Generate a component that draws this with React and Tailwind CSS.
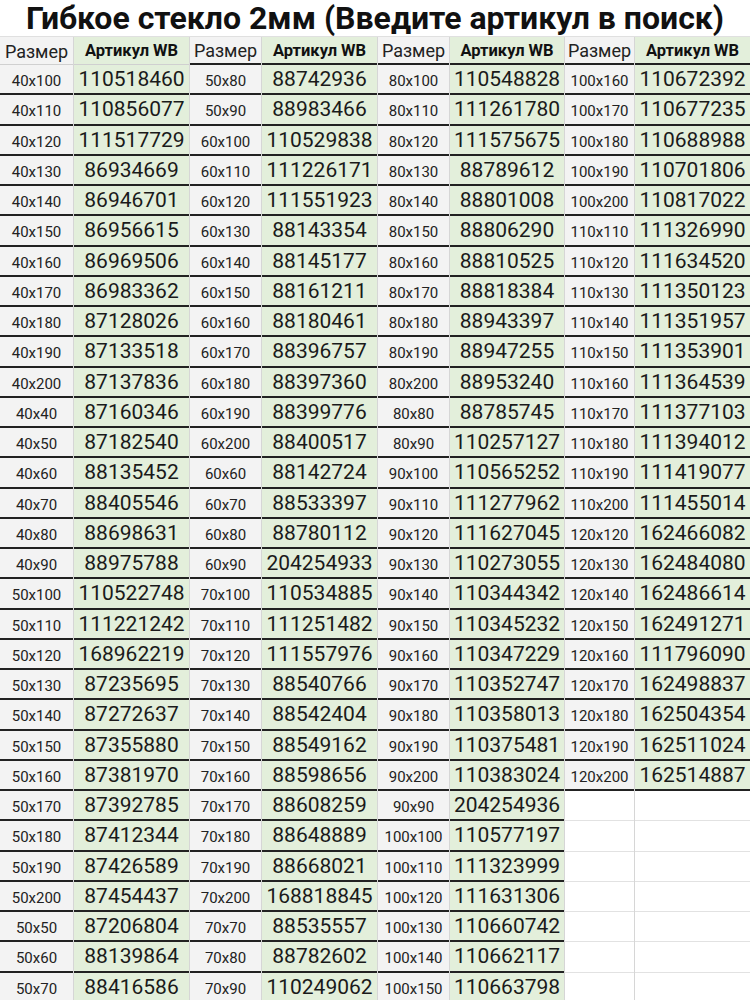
import React from 'react';

const cols = [
  [
    ['40x100', '110518460'], ['40x110', '110856077'], ['40x120', '111517729'], ['40x130', '86934669'],
    ['40x140', '86946701'], ['40x150', '86956615'], ['40x160', '86969506'], ['40x170', '86983362'],
    ['40x180', '87128026'], ['40x190', '87133518'], ['40x200', '87137836'], ['40x40', '87160346'],
    ['40x50', '87182540'], ['40x60', '88135452'], ['40x70', '88405546'], ['40x80', '88698631'],
    ['40x90', '88975788'], ['50x100', '110522748'], ['50x110', '111221242'], ['50x120', '168962219'],
    ['50x130', '87235695'], ['50x140', '87272637'], ['50x150', '87355880'], ['50x160', '87381970'],
    ['50x170', '87392785'], ['50x180', '87412344'], ['50x190', '87426589'], ['50x200', '87454437'],
    ['50x50', '87206804'], ['50x60', '88139864'], ['50x70', '88416586'],
  ],
  [
    ['50x80', '88742936'], ['50x90', '88983466'], ['60x100', '110529838'], ['60x110', '111226171'],
    ['60x120', '111551923'], ['60x130', '88143354'], ['60x140', '88145177'], ['60x150', '88161211'],
    ['60x160', '88180461'], ['60x170', '88396757'], ['60x180', '88397360'], ['60x190', '88399776'],
    ['60x200', '88400517'], ['60x60', '88142724'], ['60x70', '88533397'], ['60x80', '88780112'],
    ['60x90', '204254933'], ['70x100', '110534885'], ['70x110', '111251482'], ['70x120', '111557976'],
    ['70x130', '88540766'], ['70x140', '88542404'], ['70x150', '88549162'], ['70x160', '88598656'],
    ['70x170', '88608259'], ['70x180', '88648889'], ['70x190', '88668021'], ['70x200', '168818845'],
    ['70x70', '88535557'], ['70x80', '88782602'], ['70x90', '110249062'],
  ],
  [
    ['80x100', '110548828'], ['80x110', '111261780'], ['80x120', '111575675'], ['80x130', '88789612'],
    ['80x140', '88801008'], ['80x150', '88806290'], ['80x160', '88810525'], ['80x170', '88818384'],
    ['80x180', '88943397'], ['80x190', '88947255'], ['80x200', '88953240'], ['80x80', '88785745'],
    ['80x90', '110257127'], ['90x100', '110565252'], ['90x110', '111277962'], ['90x120', '111627045'],
    ['90x130', '110273055'], ['90x140', '110344342'], ['90x150', '110345232'], ['90x160', '110347229'],
    ['90x170', '110352747'], ['90x180', '110358013'], ['90x190', '110375481'], ['90x200', '110383024'],
    ['90x90', '204254936'], ['100x100', '110577197'], ['100x110', '111323999'], ['100x120', '111631306'],
    ['100x130', '110660742'], ['100x140', '110662117'], ['100x150', '110663798'],
  ],
  [
    ['100x160', '110672392'], ['100x170', '110677235'], ['100x180', '110688988'], ['100x190', '110701806'],
    ['100x200', '110817022'], ['110x110', '111326990'], ['110x120', '111634520'], ['110x130', '111350123'],
    ['110x140', '111351957'], ['110x150', '111353901'], ['110x160', '111364539'], ['110x170', '111377103'],
    ['110x180', '111394012'], ['110x190', '111419077'], ['110x200', '111455014'], ['120x120', '162466082'],
    ['120x130', '162484080'], ['120x140', '162486614'], ['120x150', '162491271'], ['120x160', '111796090'],
    ['120x170', '162498837'], ['120x180', '162504354'], ['120x190', '162511024'], ['120x200', '162514887'],
  ],
];

// light grey row background shows through the 1px column gaps as grid lines
const grid = 'grid grid-cols-[73px_115px_71px_115px_71px_114px_69px_115px] grid-rows-1 gap-x-px bg-[#d6d6d6]';

function Cell({ tone, light, className, children }) {
  const bg = tone === 'size' ? 'bg-[#f3f3f3]' : 'bg-[#e3efdb]';
  const line = light ? 'h-px bg-[#d0d0d0]' : 'h-[2px] bg-[#222222]';
  return (
    <div className={`flex flex-col min-h-0 overflow-hidden ${bg}`}>
      <div className={`flex-1 flex items-center justify-center min-h-0 leading-none ${className}`}>{children}</div>
      <div className={`shrink-0 ${line}`} />
    </div>
  );
}

function Empty() {
  return (
    <div className="flex flex-col min-h-0 bg-white">
      <div className="flex-1" />
      <div className="h-px shrink-0 bg-[#e2e2e2]" />
    </div>
  );
}

function Pair({ item }) {
  if (!item) {
    return (
      <>
        <Empty />
        <Empty />
      </>
    );
  }
  return (
    <>
      <Cell tone="size" className="pt-[5px] text-[15px] text-[#222]">{item[0]}</Cell>
      <Cell tone="art" className="pt-[1px] text-[21px] text-[#1a1a1a]">{item[1]}</Cell>
    </>
  );
}

export default function App() {
  const rows = Array.from({ length: 31 }, (_, i) => i);
  return (
    <div className="w-[750px] bg-white font-['Roboto','Liberation_Sans',sans-serif] overflow-hidden">
      <div className="h-[36px] flex items-center justify-center text-[32px] font-bold text-[#111] leading-none whitespace-nowrap">
        Гибкое стекло 2мм (Введите артикул в поиск)
      </div>
      <div className="h-px bg-[#e0e0e0]" />
      <div className={`${grid} h-[28px]`}>
        {cols.map((_, i) => (
          <React.Fragment key={i}>
            <Cell tone="size" light={i === 0} className="pt-[2px] text-[18px] text-[#222]">Размер</Cell>
            <Cell tone="art" light={i === 0} className="pt-[2px] text-[16.5px] font-bold text-[#111]">Артикул WB</Cell>
          </React.Fragment>
        ))}
      </div>
      {rows.map((r) => (
        <div key={r} className={`${grid} h-[30.25px]`}>
          {cols.map((c, i) => (
            <Pair key={i} item={c[r]} />
          ))}
        </div>
      ))}
    </div>
  );
}
